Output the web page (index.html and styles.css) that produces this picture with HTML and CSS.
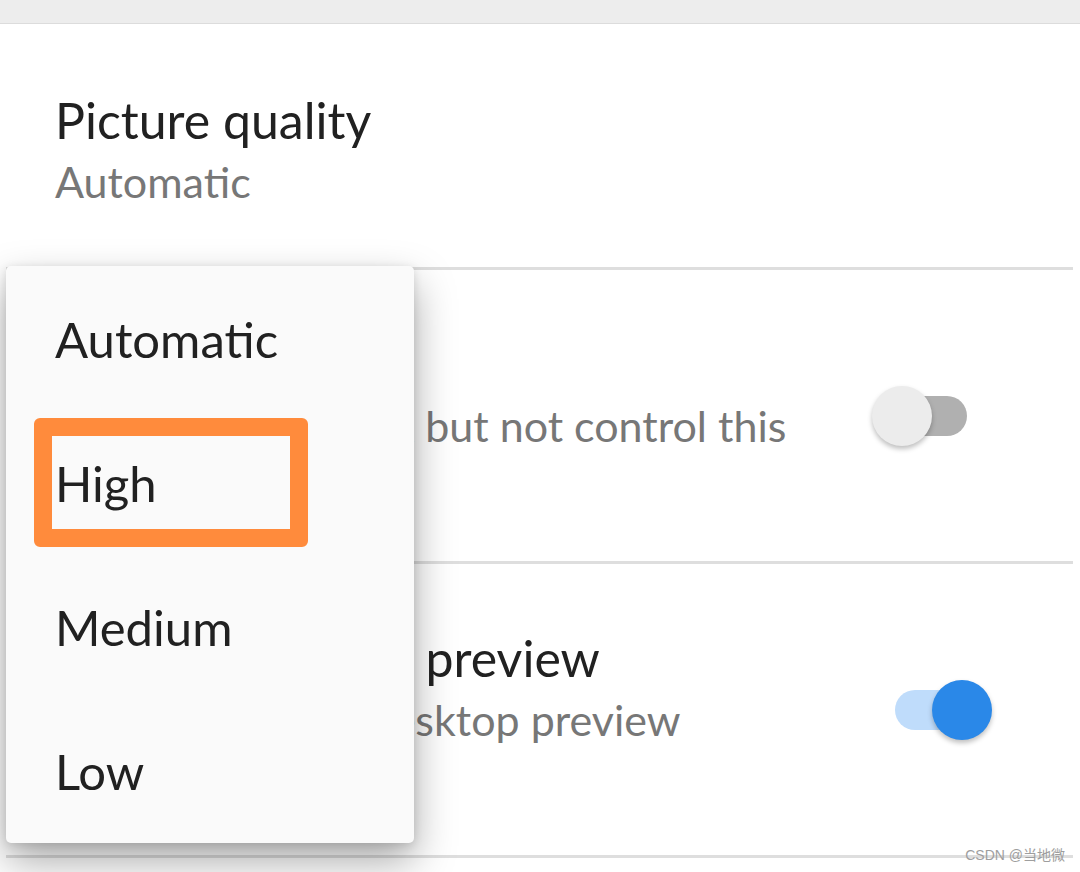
FILE: index.html
```html
<!DOCTYPE html>
<html lang="en">
<head>
<meta charset="utf-8">
<title>Settings</title>
<link rel="stylesheet" href="styles.css">
</head>
<body>
<div class="statusbar"></div>
<main class="settings">
  <section class="row row-first">
    <div class="text">
      <div class="title">Picture quality</div>
      <div class="sub">Automatic</div>
    </div>
  </section>
  <div class="divider"></div>
  <section class="row row-tall">
    <div class="text">
      <div class="title">View only</div>
      <div class="sub">Allow users to look but not control this device</div>
    </div>
    <span class="switch off"><span class="thumb"></span></span>
  </section>
  <div class="divider"></div>
  <section class="row row-tall">
    <div class="text">
      <div class="title">Remote desktop preview</div>
      <div class="sub">Displays remote desktop preview thumbnails</div>
    </div>
    <span class="switch on"><span class="thumb"></span></span>
  </section>
  <div class="divider"></div>
</main>

<div class="menu">
  <div class="menu-item">Automatic</div>
  <div class="menu-item">High<span class="highlight"></span></div>
  <div class="menu-item">Medium</div>
  <div class="menu-item">Low</div>
</div>

<div class="watermark">CSDN @当地微</div>
</body>
</html>
```
FILE: styles.css
```css
html, body {
  margin: 0;
  padding: 0;
}
body {
  width: 1080px;
  height: 872px;
  overflow: hidden;
  position: relative;
  background: #ffffff;
  font-family: Lato, "Noto Sans", sans-serif;
}
.statusbar {
  height: 23px;
  background: #ededed;
  border-bottom: 1px solid #dcdcdc;
}
.settings {
  display: flex;
  flex-direction: column;
}
.row {
  display: flex;
  align-items: center;
  justify-content: space-between;
  padding: 0 113px 0 55px;
  box-sizing: border-box;
}
.row-first {
  height: 243px;
}
.row-tall {
  height: 291px;
}
.divider {
  height: 3px;
  background: #dedede;
  margin: 0 7px 0 6px;
}
.text {
  max-width: 760px;
  padding-top: 8px;
}
.title {
  font-size: 50px;
  line-height: 56px;
  color: #212121;
}
.sub {
  margin-top: 8px;
  font-size: 43px;
  line-height: 52px;
  color: #777777;
}
.switch {
  position: relative;
  flex: none;
  width: 72px;
  height: 40px;
  border-radius: 20px;
}
.switch.off {
  background: #b0b0b0;
}
.switch.on {
  background: #bfdcfb;
}
.thumb {
  position: absolute;
  top: -10px;
  width: 60px;
  height: 60px;
  border-radius: 50%;
  box-shadow: 0 3px 5px rgba(0, 0, 0, 0.25);
}
.off .thumb {
  left: -23px;
  background: #ececec;
}
.on .thumb {
  left: 37px;
  background: #2a88e8;
}
.menu {
  position: absolute;
  left: 6px;
  top: 266px;
  width: 408px;
  padding-top: 1px;
  background: #fafafa;
  border-radius: 5px;
  box-shadow: 0 18px 40px rgba(0, 0, 0, 0.34), 0 2px 10px rgba(0, 0, 0, 0.12);
}
.menu-item {
  position: relative;
  height: 144px;
  display: flex;
  align-items: center;
  padding-left: 49px;
  font-size: 49px;
  color: #212121;
}
.highlight {
  position: absolute;
  left: 28px;
  top: 7px;
  width: 274px;
  height: 129px;
  box-sizing: border-box;
  border: 18px solid #ff8b3c;
  border-radius: 6px;
}
.watermark {
  position: absolute;
  right: 15px;
  bottom: 8px;
  font-family: "Liberation Sans", "Noto Sans CJK SC", sans-serif;
  font-size: 14px;
  color: #9e9e9e;
}
```
